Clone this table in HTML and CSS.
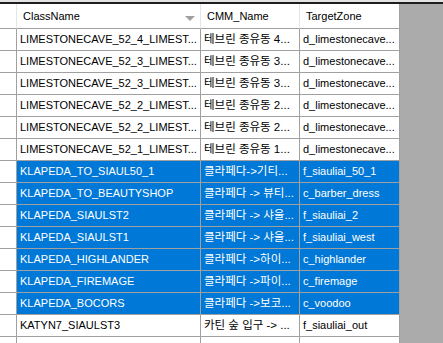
FILE: index.html
```html
<!DOCTYPE html>
<html>
<head>
<meta charset="utf-8">
<link rel="stylesheet" href="styles.css">
</head>
<body>
<div class="topbar"></div>
<div class="topline"></div>
<div class="grid">
  <div class="row head">
    <div class="c rh"></div>
    <div class="c c1">ClassName<span class="sort"></span></div>
    <div class="c c2">CMM_Name</div>
    <div class="c c3">TargetZone</div>
  </div>
  <div class="row"><div class="c rh"></div><div class="c c1">LIMESTONECAVE_52_4_LIMEST...</div><div class="c c2">테브린 종유동 4...</div><div class="c c3">d_limestonecave...</div></div>
  <div class="row"><div class="c rh"></div><div class="c c1">LIMESTONECAVE_52_3_LIMEST...</div><div class="c c2">테브린 종유동 3...</div><div class="c c3">d_limestonecave...</div></div>
  <div class="row"><div class="c rh"></div><div class="c c1">LIMESTONECAVE_52_3_LIMEST...</div><div class="c c2">테브린 종유동 3...</div><div class="c c3">d_limestonecave...</div></div>
  <div class="row"><div class="c rh"></div><div class="c c1">LIMESTONECAVE_52_2_LIMEST...</div><div class="c c2">테브린 종유동 2...</div><div class="c c3">d_limestonecave...</div></div>
  <div class="row"><div class="c rh"></div><div class="c c1">LIMESTONECAVE_52_2_LIMEST...</div><div class="c c2">테브린 종유동 2...</div><div class="c c3">d_limestonecave...</div></div>
  <div class="row"><div class="c rh"></div><div class="c c1">LIMESTONECAVE_52_1_LIMEST...</div><div class="c c2">테브린 종유동 1...</div><div class="c c3">d_limestonecave...</div></div>
  <div class="row sel"><div class="c rh"></div><div class="c c1">KLAPEDA_TO_SIAUL50_1</div><div class="c c2">클라페다-&gt;기티...</div><div class="c c3">f_siauliai_50_1</div></div>
  <div class="row sel"><div class="c rh"></div><div class="c c1">KLAPEDA_TO_BEAUTYSHOP</div><div class="c c2">클라페다 -&gt; 뷰티...</div><div class="c c3">c_barber_dress</div></div>
  <div class="row sel"><div class="c rh"></div><div class="c c1">KLAPEDA_SIAULST2</div><div class="c c2">클라페다 -&gt; 샤울...</div><div class="c c3">f_siauliai_2</div></div>
  <div class="row sel"><div class="c rh"></div><div class="c c1">KLAPEDA_SIAULST1</div><div class="c c2">클라페다 -&gt; 샤울...</div><div class="c c3">f_siauliai_west</div></div>
  <div class="row sel"><div class="c rh"></div><div class="c c1">KLAPEDA_HIGHLANDER</div><div class="c c2">클라페다 -&gt;하이...</div><div class="c c3">c_highlander</div></div>
  <div class="row sel"><div class="c rh"></div><div class="c c1">KLAPEDA_FIREMAGE</div><div class="c c2">클라페다 -&gt;파이...</div><div class="c c3">c_firemage</div></div>
  <div class="row sel"><div class="c rh"></div><div class="c c1">KLAPEDA_BOCORS</div><div class="c c2">클라페다 -&gt;보코...</div><div class="c c3">c_voodoo</div></div>
  <div class="row"><div class="c rh"></div><div class="c c1">KATYN7_SIAULST3</div><div class="c c2">카틴 숲 입구 -&gt; ...</div><div class="c c3">f_siauliai_out</div></div>
  <div class="row"><div class="c rh"></div><div class="c c1"></div><div class="c c2"></div><div class="c c3"></div></div>
</div>
</body>
</html>
```

FILE: styles.css
```css
html, body {
  margin: 0;
  padding: 0;
}
body {
  background: #ababab;
  font-family: "Liberation Sans", Arial, "Noto Sans CJK KR", sans-serif;
  font-size: 11px;
  color: #000;
  height: 343px;
  overflow: hidden;
}
.topbar {
  height: 2px;
  background: #e3e3e3;
}
.topline {
  height: 2px;
  background: #1e1e1e;
}
.grid {
  width: 400px;
  display: flex;
  flex-direction: column;
}
.row {
  display: grid;
  grid-template-columns: 17px 184px 99px 100px;
  height: 22px;
}
.c {
  box-sizing: border-box;
  border-right: 1px solid #a0a0a0;
  border-bottom: 1px solid #a0a0a0;
  background: #fff;
  white-space: nowrap;
  overflow: hidden;
  line-height: 21px;
  padding-left: 3px;
}
.c2 {
  font-size: 11.5px;
}
.rh {
  padding: 0;
}
.sel .c1, .sel .c2, .sel .c3 {
  background: #0078d7;
  color: #fff;
}
.head {
  height: 25px;
}
.head .c {
  border-right: 1px solid #e5e5e5;
  border-bottom: 1px solid #a0a0a0;
  line-height: 24px;
  padding-left: 6px;
  position: relative;
  font-size: 11px;
}
.head .c3 {
  border-right: 1px solid #a0a0a0;
}
.sort {
  position: absolute;
  right: 5px;
  top: 12px;
  width: 0;
  height: 0;
  border-left: 5px solid transparent;
  border-right: 5px solid transparent;
  border-top: 5px solid #a0a0a0;
}
```
